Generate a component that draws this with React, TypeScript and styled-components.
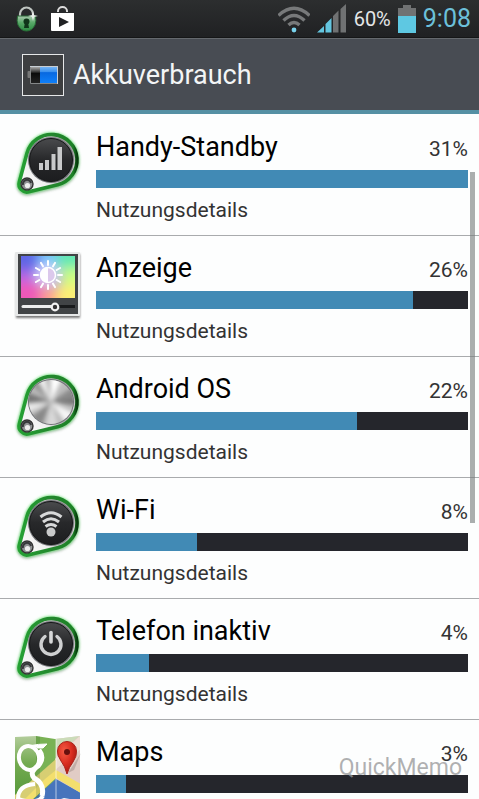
import React from "react";
import styled, { createGlobalStyle } from "styled-components";

const GlobalStyle = createGlobalStyle`
  * { box-sizing: border-box; }
  body { margin: 0; background: #fdfefe; }
`;

const Screen = styled.div`
  display: flex;
  flex-direction: column;
  height: 100vh;
  overflow: hidden;
  position: relative;
  font-family: Roboto, "Noto Sans", sans-serif;
  color: #000;
`;

const StatusBar = styled.div`
  display: flex;
  align-items: center;
  justify-content: space-between;
  flex: none;
  height: 38px;
  padding: 0 8px 0 14px;
  background: linear-gradient(#2c2e2f, #202123);
  border-bottom: 1px solid #151617;
`;

const StatusGroup = styled.div`
  display: flex;
  align-items: center;
  gap: 7px;
`;

const Percent = styled.span`
  font-size: 20px;
  line-height: 38px;
  color: #e4e6e7;
`;

const Clock = styled.time`
  font-size: 25px;
  line-height: 38px;
  color: #6cc0da;
`;

const Header = styled.header`
  display: flex;
  align-items: center;
  gap: 9px;
  flex: none;
  height: 76px;
  padding: 0 22px;
  background: #484c53;
  border-top: 1px solid #65696e;
  border-bottom: 4px solid #5590a4;
`;

const Title = styled.h1`
  margin: 0;
  font-size: 27px;
  font-weight: 400;
  line-height: 36px;
  color: #f3f5f6;
`;

const List = styled.ul`
  flex: 1;
  min-height: 0;
  overflow: hidden;
  margin: 0;
  padding: 1px 0 0;
  list-style: none;
`;

const Row = styled.li`
  display: flex;
  align-items: flex-start;
  gap: 15px;
  height: 121px;
  padding: 15px 11px 0 15px;
  border-bottom: 1px solid #a9abad;
`;

const Details = styled.div`
  flex: 1;
  min-width: 0;
`;

const Heading = styled.div`
  display: flex;
  justify-content: space-between;
  align-items: baseline;
  height: 40px;
`;

const Name = styled.h2`
  margin: 0;
  font-size: 27px;
  font-weight: 400;
  line-height: 35px;
`;

const Share = styled.span`
  font-size: 21px;
  line-height: 35px;
  color: #333;
`;

const Meter = styled.div`
  height: 18px;
  background: #25262c;
`;

const Fill = styled.div`
  height: 100%;
  background: #418ab5;
`;

const Note = styled.p`
  margin: 8px 0 0;
  font-size: 21px;
  line-height: 28px;
  color: #333;
`;

const ScrollThumb = styled.div`
  position: absolute;
  top: 172px;
  right: 4px;
  width: 5px;
  height: 351px;
  background: rgba(120, 124, 124, 0.62);
`;

const Watermark = styled.span`
  position: absolute;
  right: 17px;
  bottom: 16px;
  font-size: 23px;
  line-height: 30px;
  color: rgba(150, 150, 152, 0.75);
`;

const Icon = styled.svg`
  display: block;
  flex: none;
`;

const LockIcon = () => (
  <Icon width="26" height="30" viewBox="0 0 26 30" aria-hidden="true">
    <defs>
      <linearGradient id="lock" x1="0" y1="0" x2="0" y2="1">
        <stop offset="0" stopColor="#a9c9ae" />
        <stop offset=".45" stopColor="#58a868" />
        <stop offset="1" stopColor="#2c8b42" />
      </linearGradient>
    </defs>
    <path d="M6 14V10a6.500 6.500 0 0 1 13 0v4" fill="none" stroke="#bfc5c1" strokeWidth="2.200" />
    <path d="M3.500 12h18q1 5-.5 9-3 6-8.500 6T4 21q-1.500-4-.5-9z" fill="url(#lock)" stroke="#286b36" />
    <circle cx="12.500" cy="17.500" r="3" fill="#10351a" />
    <path d="M11 18h3l1 6h-5z" fill="#10351a" />
    <path d="M19 7l1 4 4 1-4 1-1 4-1-4-4-1 4-1z" fill="#fff" opacity=".85" />
  </Icon>
);

const StoreIcon = () => (
  <Icon width="29" height="26" viewBox="-3 2 29 26" aria-hidden="true">
    <path d="M8 8V7a4.500 4 0 0 1 9 0V8" fill="none" stroke="#ddd" strokeWidth="2" />
    <path d="M1 9h23v17q0 1-1 1H2q-1 0-1-1z" fill="#fff" />
    <path d="M9 13l10 5-10 5z" fill="#202123" />
  </Icon>
);

const WifiStatusIcon = () => (
  <Icon width="32" height="28" viewBox="1 0 32 28" aria-hidden="true">
    <g fill="none" stroke="#77797a" strokeWidth="3.400">
      <path d="M1.500 10.500Q17-4 32.500 10.500" />
      <path d="M6.500 15.500Q17 5.500 27.500 15.500" />
      <path d="M11.500 20Q17 15 22.500 20" />
    </g>
    <circle cx="17" cy="25" r="2.400" fill="#79d2ec" />
  </Icon>
);

const SignalIcon = () => (
  <Icon width="30" height="29" viewBox="0 0 30 29" aria-hidden="true">
    <path d="M0 28.500L7 22v6.500zM8.500 20l6-6v14.500h-6z" fill="#63c5df" />
    <path d="M16 12l5.500-5.500v22H16zM23.500 5L29 0v28.500h-5.500z" fill="#707273" />
  </Icon>
);

const BatteryStatusIcon = () => (
  <Icon width="18" height="28" viewBox="0 0 18 28" aria-hidden="true">
    <path d="M5 0h8v3h5v9H0V3h5z" fill="#707273" />
    <path d="M0 11h18v17H0z" fill="#5ec8e2" />
  </Icon>
);

const BatteryAppIcon = () => (
  <Icon width="42" height="42" viewBox="0 0 42 42" aria-hidden="true">
    <defs>
      <linearGradient id="cellBlue" x1="0" y1="0" x2="0" y2="1">
        <stop offset="0" stopColor="#75b4f5" />
        <stop offset=".3" stopColor="#3a91ef" />
        <stop offset=".35" stopColor="#0868e0" />
        <stop offset="1" stopColor="#0f80fa" />
      </linearGradient>
      <linearGradient id="cellDark" x1="0" y1="0" x2="0" y2="1">
        <stop offset="0" stopColor="#aaa" />
        <stop offset=".3" stopColor="#3a3a3a" />
        <stop offset=".4" stopColor="#0b0b0b" />
        <stop offset="1" stopColor="#222" />
      </linearGradient>
    </defs>
    <rect x=".5" y=".5" width="41" height="41" fill="#3d3e40" stroke="#e6e7e8" />
    <rect x="5.500" y="17" width="3" height="7" rx="1" fill="#777" />
    <rect x="8" y="12" width="28" height="18" rx="1" fill="#858788" />
    <rect x="9" y="13" width="9" height="16" fill="url(#cellDark)" />
    <rect x="18" y="13" width="17" height="16" fill="url(#cellBlue)" />
    <path d="M8 12.500h28M35.500 12v18" stroke="#c8ced4" />
  </Icon>
);

const METAL_WEDGES = [
  { points: "36,30 36,4 48,4", color: "#fff" },
  { points: "36,30 65,10 65,24", color: "#8a8a8a" },
  { points: "36,30 65,24 65,34", color: "#777" },
  { points: "36,30 65,44 56,58", color: "#f5f5f5" },
  { points: "36,30 45,60 30,60", color: "#d9d9d9" },
  { points: "36,30 24,60 10,50", color: "#888" },
  { points: "36,30 7,43 7,30", color: "#ededed" },
  { points: "36,30 7,32 7,18", color: "#777" },
  { points: "36,30 12,10 20,2", color: "#999" },
  { points: "36,30 20,2 28,2", color: "#f7f7f7" },
];

type DialProps = { id: string; metal?: boolean; children?: React.ReactNode };

const DialIcon = ({ id, metal = false, children }: DialProps) => {
  const drop = "M11.900 23.400A25.500 25.500 0 1 1 42.600 54.800L13.900 61.800A8 8 0 0 1 4.300 51.900Z";
  return (
    <Icon width="66" height="72" viewBox="0 0 66 72" overflow="visible" aria-hidden="true">
      <defs>
        <filter id={`${id}-glow`} x="-20%" y="-20%" width="140%" height="140%">
          <feGaussianBlur stdDeviation="1.700" />
        </filter>
        <filter id={`${id}-soft`}>
          <feGaussianBlur stdDeviation="2" />
        </filter>
        <linearGradient id={`${id}-rim`} x1="0" y1="0" x2="1" y2="0">
          <stop offset="0" stopColor="#25a034" />
          <stop offset=".6" stopColor="#23862d" />
          <stop offset=".93" stopColor="#1c8226" />
          <stop offset="1" stopColor="#063b0c" />
        </linearGradient>
        <linearGradient id={`${id}-plate`} x1="1" y1="0" x2="0" y2="1">
          <stop offset="0" stopColor="#666" />
          <stop offset=".3" stopColor="#d4d4d4" />
          <stop offset=".5" stopColor="#a5a6aa" />
          <stop offset=".7" stopColor="#f1f1f1" />
          <stop offset="1" stopColor="#fff" />
        </linearGradient>
        <linearGradient id={`${id}-face`} x1="0" y1="0" x2="0" y2="1">
          <stop offset="0" stopColor="#4a4b4d" />
          <stop offset=".5" stopColor="#27282a" />
          <stop offset="1" stopColor="#1c1d1f" />
        </linearGradient>
        <clipPath id={`${id}-clip`}>
          <circle cx="36" cy="30" r="22" />
        </clipPath>
      </defs>
      <path d={drop} transform="translate(0 1.500)" fill="#777" stroke="#999" strokeWidth="4" filter={`url(#${id}-glow)`} opacity=".7" />
      <path d={drop} fill="none" stroke="#5fe56b" strokeWidth="4" filter={`url(#${id}-glow)`} />
      <path d={drop} fill={`url(#${id}-plate)`} stroke={`url(#${id}-rim)`} strokeWidth="3.600" />
      <circle cx="36" cy="30" r="23" fill="#707276" />
      {metal ? (
        <g clipPath={`url(#${id}-clip)`}>
          <circle cx="36" cy="30" r="23" fill="#bcbcbc" />
          <g filter={`url(#${id}-soft)`}>
            {METAL_WEDGES.map((wedge) => (
              <polygon key={wedge.points} points={wedge.points} fill={wedge.color} />
            ))}
          </g>
        </g>
      ) : (
        <circle cx="36" cy="30" r="21.500" fill={`url(#${id}-face)`} stroke="#151617" />
      )}
      <circle cx="12" cy="54" r="6" fill="#8f9193" stroke="#333" strokeWidth="1.400" />
      <path d="M8 55a4 4 0 0 1 8-2" fill="none" stroke="#37393b" strokeWidth="2" />
      <circle cx="12.500" cy="55.500" r="2.600" fill="#eee" />
      {children}
    </Icon>
  );
};

const StandbyIcon = () => (
  <DialIcon id="standby">
    <path d="M24 33h4v7h-4zM30 30h4v10h-4zM36.500 24h4v16h-4zM42.500 17h4.500v23h-4.500z" fill="#c8c9ca" />
  </DialIcon>
);

const WifiIcon = () => (
  <DialIcon id="wifi">
    <g fill="none" stroke="#d7d8d9" strokeWidth="3">
      <path d="M25.500 24Q36 15.500 46.500 24" />
      <path d="M28 29Q36 22.500 44 29" />
      <path d="M30.500 33.500Q36 29.500 41.500 33.500" />
    </g>
    <circle cx="36" cy="39" r="4.500" fill="#c9cacb" />
  </DialIcon>
);

const PowerIcon = () => (
  <DialIcon id="power">
    <path d="M30 22.500A10 10 0 1 0 42 22.500" fill="none" stroke="#cfd0d1" strokeWidth="3.400" strokeLinecap="round" />
    <path d="M36 18.500v9.500" stroke="#d7d8d9" strokeWidth="3.600" strokeLinecap="round" />
  </DialIcon>
);

const DisplayIcon = () => (
  <Icon width="66" height="72" viewBox="0 0 66 72" overflow="visible" aria-hidden="true">
    <defs>
      <filter id="displayShadow" x="-10%" y="-10%" width="120%" height="120%">
        <feGaussianBlur stdDeviation="1.200" />
      </filter>
      <filter id="displayBlend">
        <feGaussianBlur stdDeviation="6" />
      </filter>
      <clipPath id="displayClip">
        <rect x="6" y="5" width="54" height="42" />
      </clipPath>
    </defs>
    <rect x="1" y="3" width="64" height="64" fill="#777" filter="url(#displayShadow)" />
    <rect x="0" y="1" width="65" height="64" rx="1" fill="#e6e8e8" />
    <rect x="3" y="3" width="60" height="60" fill="#414446" />
    <g clipPath="url(#displayClip)">
      <rect x="6" y="5" width="54" height="42" fill="#a4a0ee" />
      <g filter="url(#displayBlend)">
        <rect x="-8" y="-8" width="32" height="28" fill="#5f66e6" />
        <rect x="24" y="-8" width="20" height="22" fill="#70c4fa" />
        <rect x="42" y="-8" width="32" height="28" fill="#62e8b4" />
        <rect x="46" y="17" width="28" height="17" fill="#ccff80" />
        <rect x="-8" y="20" width="26" height="14" fill="#b966e4" />
        <rect x="-8" y="32" width="34" height="30" fill="#f058b8" />
        <rect x="26" y="36" width="18" height="26" fill="#ffa08c" />
        <rect x="42" y="34" width="32" height="28" fill="#fcee75" />
        <circle cx="32" cy="23" r="10" fill="#e5dcff" />
      </g>
    </g>
    <g stroke="#fff" strokeWidth="2" strokeLinecap="round">
      {[0, 30, 60, 90, 120, 150, 180, 210, 240, 270, 300, 330].map((angle) => (
        <path key={angle} d="M33 14V10" transform={`rotate(${angle} 33 24)`} />
      ))}
    </g>
    <circle cx="33" cy="24" r="7.500" fill="#dcc9ec" stroke="#fff" strokeWidth="1.500" />
    <path d="M33 16.500a7.500 7.500 0 0 0 0 15z" fill="#fff" />
    <path d="M8 55.500h52" stroke="#191b1c" strokeWidth="3" />
    <path d="M8 55.500h30" stroke="#eceded" strokeWidth="3" strokeLinecap="round" />
    <circle cx="40" cy="56" r="3.300" fill="#333" stroke="#f2f2f2" strokeWidth="2.200" />
  </Icon>
);

const MapsIcon = () => (
  <Icon width="66" height="72" viewBox="0 0 66 72" aria-hidden="true">
    <defs>
      <linearGradient id="mapLeft" x1="0" y1="0" x2="0" y2="1">
        <stop offset="0" stopColor="#b5ce9e" />
        <stop offset=".4" stopColor="#74ab51" />
        <stop offset="1" stopColor="#4e9434" />
      </linearGradient>
      <radialGradient id="mapPin" cx=".35" cy=".3" r=".8">
        <stop offset="0" stopColor="#f45b45" />
        <stop offset=".5" stopColor="#d92d20" />
        <stop offset="1" stopColor="#9c150f" />
      </radialGradient>
      <clipPath id="mapSheet">
        <path d="M0 2L21 1 40 4 65 1V64L40 70 21 64 0 70Z" />
      </clipPath>
    </defs>
    <g clipPath="url(#mapSheet)">
      <path d="M0 0h21v70H0z" fill="url(#mapLeft)" />
      <path d="M21 0h20v70H21z" fill="#79b255" />
      <path d="M41 0h25v70H41z" fill="#e1ccc5" />
      <path d="M40 24L66 0v14L40 35z" fill="#eddfd4" />
      <path d="M41 0h25L41 19z" fill="#cbdcb9" />
      <path d="M0 70V60L41 24v15L8 70z" fill="#d7ce73" />
      <path d="M12 70L41 44 66 58v12z" fill="#4774bc" />
      <path d="M30 44l11-9 25 14v9L41 43 16 66H8z" fill="#f3df6d" />
      <path d="M37 67l12-4 17 3v6H35z" fill="#f6f8fb" />
      <path d="M21 0h4v70h-4z" fill="#325d27" opacity=".18" />
      <path d="M40 0h2v70h-2z" fill="#fff" opacity=".3" />
      <ellipse cx="14" cy="23" rx="10" ry="12" transform="rotate(-12 14 23)" fill="none" stroke="#fff" strokeWidth="4" />
      <path d="M16 10.500Q23 9 32 9l-4 4h-6" fill="#fff" stroke="#fff" />
      <path d="M24 15Q30 23 23 31 14 37 19 43 30 49 27 61" fill="none" stroke="#fff" strokeWidth="5" />
      <path d="M28 61Q22 70 3 64 3 50 20 49" fill="none" stroke="#fff" strokeWidth="4" />
    </g>
    <path d="M53 38L66 18l-7 17z" fill="#76675f" opacity=".3" />
    <path d="M52 39Q50 31 46 26 42 20 42.500 16A9.500 9.500 0 0 1 61.500 16Q62 21 58 27 54 32 52 39Z" fill="url(#mapPin)" stroke="#aa231b" />
    <circle cx="52" cy="17" r="3" fill="#68100e" />
  </Icon>
);

type Usage = { name: string; share: number; fill: number; note?: string; icon: () => React.JSX.Element };

const USAGE: Usage[] = [
  { name: "Handy-Standby", share: 31, fill: 372, note: "Nutzungsdetails", icon: StandbyIcon },
  { name: "Anzeige", share: 26, fill: 317, note: "Nutzungsdetails", icon: DisplayIcon },
  { name: "Android OS", share: 22, fill: 261, note: "Nutzungsdetails", icon: () => <DialIcon id="os" metal /> },
  { name: "Wi-Fi", share: 8, fill: 101, note: "Nutzungsdetails", icon: WifiIcon },
  { name: "Telefon inaktiv", share: 4, fill: 53, note: "Nutzungsdetails", icon: PowerIcon },
  { name: "Maps", share: 3, fill: 30, icon: MapsIcon },
];

const MAX_FILL = 372;

export default function App() {
  return (
    <Screen>
      <GlobalStyle />
      <StatusBar>
        <StatusGroup>
          <LockIcon />
          <StoreIcon />
        </StatusGroup>
        <StatusGroup>
          <WifiStatusIcon />
          <SignalIcon />
          <Percent>60%</Percent>
          <BatteryStatusIcon />
          <Clock>9:08</Clock>
        </StatusGroup>
      </StatusBar>
      <Header>
        <BatteryAppIcon />
        <Title>Akkuverbrauch</Title>
      </Header>
      <List>
        {USAGE.map(({ name, share, fill, note, icon: AppIcon }) => (
          <Row key={name}>
            <AppIcon />
            <Details>
              <Heading>
                <Name>{name}</Name>
                <Share>{share}%</Share>
              </Heading>
              <Meter role="meter" aria-label={name} aria-valuenow={share} aria-valuemin={0} aria-valuemax={100}>
                <Fill style={{ width: `${(fill / MAX_FILL) * 100}%` }} />
              </Meter>
              {note && <Note>{note}</Note>}
            </Details>
          </Row>
        ))}
      </List>
      <ScrollThumb />
      <Watermark>QuickMemo</Watermark>
    </Screen>
  );
}
